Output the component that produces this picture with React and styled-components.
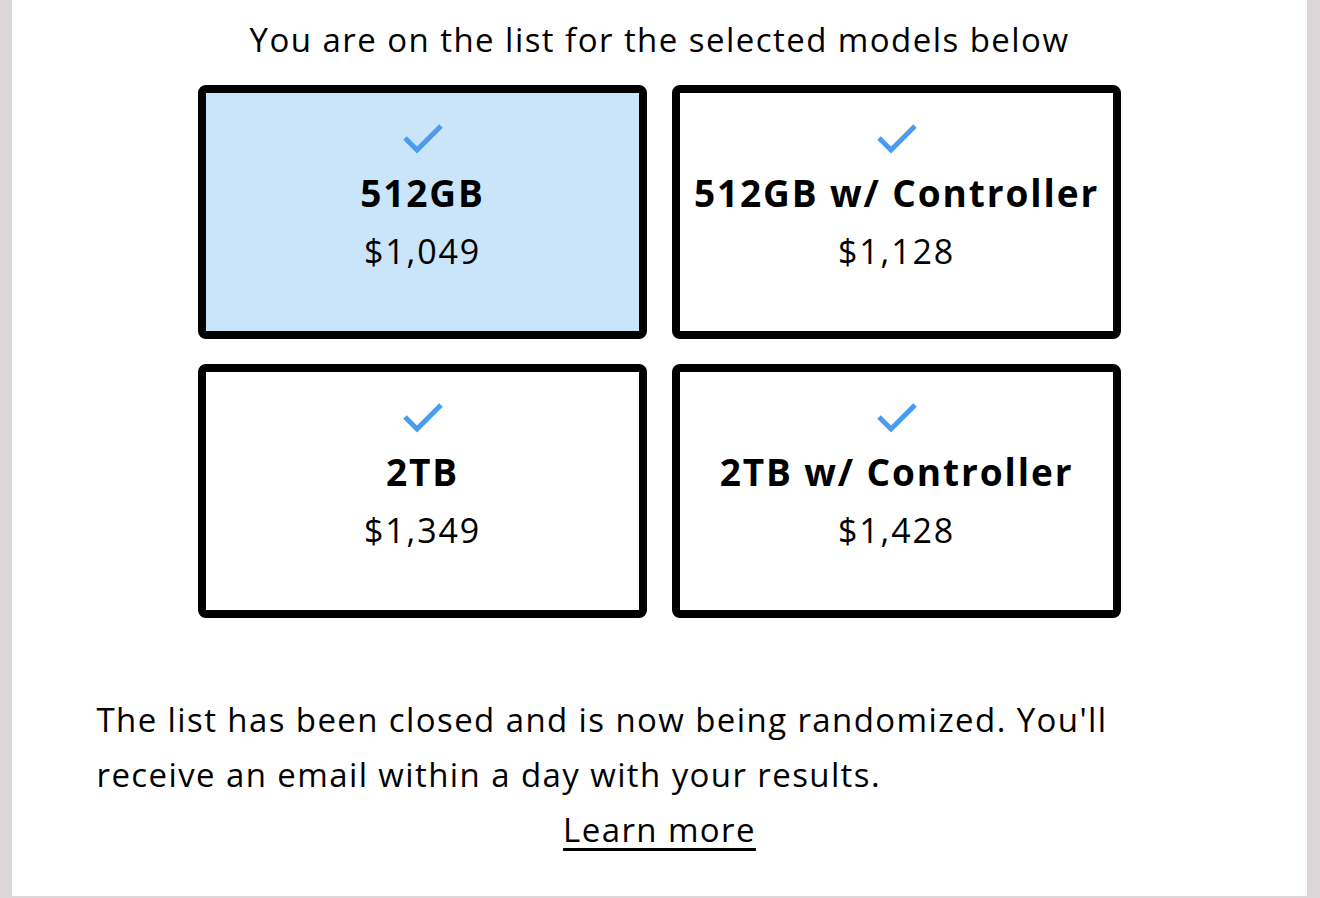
import styled, { createGlobalStyle } from "styled-components";

const GlobalStyle = createGlobalStyle`
  html, body {
    margin: 0;
    padding: 0;
    background: #ddd6d8;
  }
  body {
    font-family: "Open Sans", "Noto Sans", sans-serif;
    color: #000;
  }
`;

const Panel = styled.main`
  margin: 0 13px 0 12px;
  height: 896px;
  background: #fff;
  display: flex;
  flex-direction: column;
  align-items: center;
  padding-top: 18px;
  box-sizing: border-box;
`;

const Heading = styled.h2`
  margin: 0;
  font-size: 33px;
  line-height: 44px;
  font-weight: 400;
  letter-spacing: 1.45px;
  text-align: center;
`;

const Grid = styled.div`
  margin-top: 23px;
  display: grid;
  grid-template-columns: repeat(2, 449px);
  grid-auto-rows: 254px;
  gap: 25px;
`;

const Card = styled.div`
  box-sizing: border-box;
  border: 8px solid #000;
  border-radius: 8px;
  background: ${(p) => (p.$active ? "#cae4f9" : "#fff")};
  display: flex;
  flex-direction: column;
  align-items: center;
  padding-top: 31px;
`;

const Check = styled.svg`
  width: 40px;
  height: 30px;
  display: block;
`;

const Title = styled.div`
  margin-top: 17px;
  font-size: 37px;
  line-height: 44px;
  font-weight: 700;
  letter-spacing: 1.9px;
  white-space: nowrap;
`;

const Price = styled.div`
  margin-top: 14px;
  font-size: 34px;
  line-height: 44px;
  letter-spacing: 1.8px;
`;

const Note = styled.p`
  margin: 74px 0 0;
  width: 1126px;
  font-size: 33px;
  line-height: 55px;
  letter-spacing: 1.4px;
`;

const LearnMore = styled.a`
  font-size: 33px;
  line-height: 55px;
  letter-spacing: 1.4px;
  color: #000;
  text-decoration: underline;
  text-underline-offset: 6px;
  text-decoration-thickness: 3px;
`;

const models = [
  { name: "512GB", price: "$1,049", active: true },
  { name: "512GB w/ Controller", price: "$1,128" },
  { name: "2TB", price: "$1,349" },
  { name: "2TB w/ Controller", price: "$1,428" },
];

function CheckMark() {
  return (
    <Check viewBox="0 0 40 30">
      <path
        d="M2 14 L14 26 L38 2"
        fill="none"
        stroke="#4a9cf1"
        strokeWidth="5"
      />
    </Check>
  );
}

export default function App() {
  return (
    <>
      <GlobalStyle />
      <Panel>
        <Heading>You are on the list for the selected models below</Heading>
        <Grid>
          {models.map((m) => (
            <Card key={m.name} $active={m.active}>
              <CheckMark />
              <Title>{m.name}</Title>
              <Price>{m.price}</Price>
            </Card>
          ))}
        </Grid>
        <Note>
          The list has been closed and is now being randomized. You'll receive
          an email within a day with your results.
        </Note>
        <LearnMore href="#">Learn more</LearnMore>
      </Panel>
    </>
  );
}
